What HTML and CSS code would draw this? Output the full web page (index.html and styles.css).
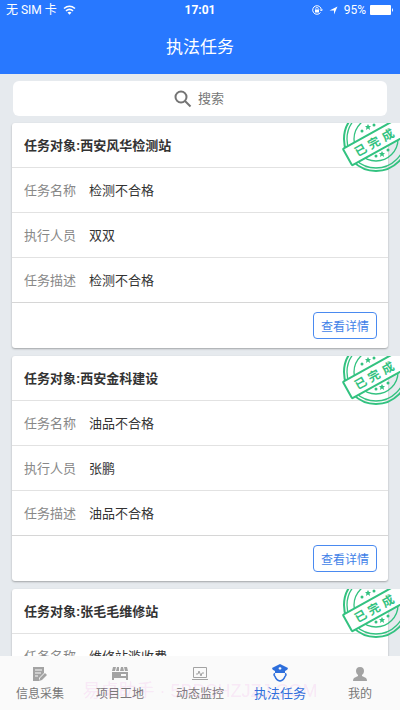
FILE: index.html
```html
<!DOCTYPE html>
<html lang="zh-CN">
<head>
    <meta charset="UTF-8">
    <meta name="viewport" content="width=device-width, initial-scale=1.0">
    <title>执法任务</title>
    <link rel="stylesheet" href="styles.css">
</head>
<body>
    <!-- shared shapes -->
    <svg class="defs" width="0" height="0" aria-hidden="true">
        <symbol id="stamp" viewBox="0 0 60 52">
            <g fill="none" stroke="#33c280">
                <circle cx="35" cy="16" r="32" stroke-width="2"/>
                <circle cx="35" cy="16" r="29" stroke-width="1.300"/>
                <circle cx="35" cy="16" r="22" stroke-width="1.300"/>
            </g>
            <g fill="#33c280">
                <path d="M0-3 1-1 3-1 1.500.500 2 3 0 1.500-2 3-1.500.500-3-1-1-1Z" transform="translate(27 4)"/>
                <path d="M0-3 1-1 3-1 1.500.500 2 3 0 1.500-2 3-1.500.500-3-1-1-1Z" transform="translate(41 31)"/>
                <circle cx="33" cy="2" r="1.500"/>
                <circle cx="21" cy="8" r="1.500"/>
                <circle cx="35" cy="33" r="1.500"/>
                <circle cx="47" cy="27" r="1.500"/>
            </g>
            <g transform="translate(33 20) rotate(-29)">
                <rect x="-30" y="-10" width="74" height="19" rx="1" fill="#fff" stroke="#33c280" stroke-width="2"/>
                <text class="stamp-text" x="-21 -6 10" y="4">已完成</text>
            </g>
        </symbol>
    </svg>

    <header class="header">
        <div class="status">
            <div class="status-left">
                <span>无 SIM 卡</span>
                <svg width="13" height="10" viewBox="0 0 13 10" fill="none" stroke="#fff" stroke-width="1.600">
                    <path d="M1 3.500Q6.500-1 12 3.500M3 5.800Q6.500 3 10 5.800"/>
                    <path d="M4.500 7.500Q6.500 6 8.500 7.500L6.500 9.700Z" fill="#fff" stroke="none"/>
                </svg>
            </div>
            <div class="status-time">17:01</div>
            <div class="status-right">
                <svg width="11" height="10" viewBox="0 0 11 10" fill="none" stroke="#fff">
                    <path d="M8.500 7.500A4.300 4.300 0 1 1 9.300 5M8 4.500 9.300 6 10.700 4.500"/>
                    <rect x="3" y="4.500" width="4" height="3" fill="#fff" stroke="none"/>
                    <path d="M3.800 4.500V3.500a1.200 1.200 0 0 1 2.400 0v1" stroke-width=".8"/>
                </svg>
                <svg width="9" height="9" viewBox="0 0 9 9"><path d="M8.500.5 5 8.500V4.500H.5Z" fill="#fff"/></svg>
                <span class="battery">95%
                    <svg width="24" height="10" viewBox="0 0 24 10" fill="#fff">
                        <rect width="21" height="10" rx="1"/>
                        <path d="M22 3q2 2 0 4Z"/>
                    </svg>
                </span>
            </div>
        </div>
        <h1>执法任务</h1>
    </header>

    <main class="content">
        <label class="search">
            <svg width="18" height="18" viewBox="0 0 18 18" fill="none" stroke="#747474" stroke-width="2">
                <circle cx="7" cy="7" r="5.500"/>
                <path d="M11 11 16.500 16.500"/>
            </svg>
            <input type="text" placeholder="搜索" aria-label="搜索">
        </label>

        <article class="card">
            <h2>任务对象:西安风华检测站</h2>
            <div class="stamp"><svg width="60" height="52"><use href="#stamp"/></svg></div>
            <dl>
                <div class="row"><dt>任务名称</dt><dd>检测不合格</dd></div>
                <div class="row"><dt>执行人员</dt><dd>双双</dd></div>
                <div class="row"><dt>任务描述</dt><dd>检测不合格</dd></div>
            </dl>
            <div class="card-footer"><button type="button">查看详情</button></div>
        </article>

        <article class="card">
            <h2>任务对象:西安金科建设</h2>
            <div class="stamp"><svg width="60" height="52"><use href="#stamp"/></svg></div>
            <dl>
                <div class="row"><dt>任务名称</dt><dd>油品不合格</dd></div>
                <div class="row"><dt>执行人员</dt><dd>张鹏</dd></div>
                <div class="row"><dt>任务描述</dt><dd>油品不合格</dd></div>
            </dl>
            <div class="card-footer"><button type="button">查看详情</button></div>
        </article>

        <article class="card">
            <h2>任务对象:张毛毛维修站</h2>
            <div class="stamp"><svg width="60" height="52"><use href="#stamp"/></svg></div>
            <dl>
                <div class="row"><dt>任务名称</dt><dd>维修站滥收费</dd></div>
            </dl>
        </article>
    </main>

    <nav class="tabs">
        <a href="#collect">
            <svg width="16" height="16" viewBox="0 0 16 16">
                <path d="M1 1h11v6L7 12v3H1Z" fill="#a3a3a3"/>
                <path d="M3 4h7M3 7h6M3 10h3" stroke="#fafafa"/>
                <path d="M13 7l2 2-5 5-3 1 1-3Z" fill="#a3a3a3"/>
            </svg>
            <span>信息采集</span>
        </a>
        <a href="#sites">
            <svg width="16" height="16" viewBox="0 0 16 16" fill="#a3a3a3">
                <path d="M1 1h3L3 5H0ZM5 1h2v4H4ZM9 1h2l1 4H8ZM12 1h3l1 4h-3ZM0 6h16v8h-2v-2H2v2H0ZM9 8v2h5V8Z" fill-rule="evenodd"/>
            </svg>
            <span>项目工地</span>
        </a>
        <a href="#monitor">
            <svg width="16" height="16" viewBox="0 0 16 16" fill="none" stroke="#a3a3a3">
                <path d="M1.500 1.500h13v10h-13ZM0 13.500h16"/>
                <path d="M4 8h2l1-3 2 5 1-3 2 0"/>
            </svg>
            <span>动态监控</span>
        </a>
        <a href="#tasks" class="active">
            <svg width="18" height="18" viewBox="0 0 18 18" fill="#2e6fdc">
                <path d="M1 4Q5 2 9 0q4 2 8 4 0 2-3 3v2H4V7Q1 6 1 4ZM9 3 7.500 4 8 5.500h2L10.500 4Z" fill-rule="evenodd"/>
                <path d="M4 9.500q-2 1 0 3 1.500 4 5 4.500 3.500-.5 5-4.500 2-2 0-3" fill="none" stroke="#2e6fdc" stroke-width="1.500"/>
            </svg>
            <span>执法任务</span>
        </a>
        <a href="#me">
            <svg width="16" height="16" viewBox="0 0 16 16" fill="#a3a3a3">
                <path d="M8 1c3 0 4 2 4 4s-1 3-2 4v1l4 2q1 1 1 3H1q0-2 1-3l4-2V9C5 8 4 7 4 5s1-4 4-4Z"/>
            </svg>
            <span>我的</span>
        </a>
        <div class="watermark">易桌助手 · 5BDSHZJZJ.COM</div>
    </nav>
</body>
</html>
```
FILE: styles.css
```css
* {
    box-sizing: border-box;
}

body {
    margin: 0;
    height: 100vh;
    display: flex;
    flex-direction: column;
    overflow: hidden;
    background-color: #e6eaee;
    color: #333;
    font-family: "Liberation Sans", "Noto Sans CJK SC", sans-serif;
    font-size: 13px;
}

.defs {
    position: absolute;
}

.header {
    flex: none;
    background-color: #2878ff;
    color: #fff;
}

.status {
    display: grid;
    grid-template-columns: 1fr auto 1fr;
    align-items: center;
    height: 20px;
    padding: 0 6px;
    font-family: Roboto, "Noto Sans CJK SC", sans-serif;
    font-size: 12px;
    line-height: 20px;
}

.status-left,
.status-right {
    display: flex;
    align-items: center;
    gap: 6px;
}

.status-right {
    justify-content: flex-end;
}

.battery {
    display: flex;
    align-items: center;
    gap: 4px;
}

.status-time {
    font-weight: bold;
}

.header h1 {
    margin: 0;
    height: 54px;
    line-height: 56px;
    text-align: center;
    font-size: 17px;
    font-weight: normal;
}

.content {
    flex: 1;
    min-height: 0;
    overflow: hidden;
    padding: 7px 12px 0;
}

.search {
    display: flex;
    align-items: center;
    justify-content: center;
    gap: 6px;
    height: 35px;
    margin: 0 1px 7px;
    border-radius: 6px;
    background-color: #fff;
}

.search input {
    width: 28px;
    padding: 0;
    border: none;
    outline: none;
    background: none;
    font: inherit;
}

.search input::placeholder {
    color: #777;
}

.card {
    position: relative;
    margin-bottom: 8px;
    border-radius: 3px;
    background-color: #fff;
    box-shadow: 0 1px 2px rgba(0, 0, 0, 0.3);
}

.card h2 {
    margin: 0;
    padding: 0 12px;
    height: 44px;
    line-height: 46px;
    font-size: 13px;
    font-weight: bold;
}

.card dl {
    margin: 0;
}

.row {
    display: flex;
    gap: 13px;
    height: 45px;
    padding: 0 12px;
    line-height: 46px;
    border-top: 1px solid #e2e2e2;
}

.row dt {
    color: #888;
}

.row dd {
    margin: 0;
}

.card-footer {
    display: flex;
    align-items: center;
    justify-content: flex-end;
    height: 46px;
    padding: 0 11px;
    border-top: 1px solid #d6d6d6;
}

.card-footer button {
    height: 27px;
    padding: 0 7px;
    border: 1px solid #4a8af0;
    border-radius: 4px;
    background-color: #fff;
    color: #3f7fe8;
    font: inherit;
    font-size: 12px;
}

/* the stamp hangs over the right edge of the card */
.stamp {
    position: absolute;
    top: 0;
    right: -13px;
    height: 52px;
}

.stamp-text {
    fill: #33c280;
    font-size: 12px;
    font-weight: bold;
}

.tabs {
    position: relative;
    flex: none;
    display: flex;
    height: 54px;
    background-color: #fafafa;
}

.tabs a {
    flex: 1;
    display: flex;
    flex-direction: column;
    align-items: center;
    justify-content: flex-end;
    gap: 3px;
    padding-bottom: 7px;
    color: #777;
    font-size: 12px;
    line-height: 18px;
    text-decoration: none;
}

.tabs .active {
    color: #2e6fdc;
    font-size: 13px;
}

.watermark {
    position: absolute;
    top: 20px;
    left: 0;
    width: 100%;
    text-align: center;
    color: rgba(240, 120, 220, 0.15);
    font-size: 18px;
    pointer-events: none;
}
```
